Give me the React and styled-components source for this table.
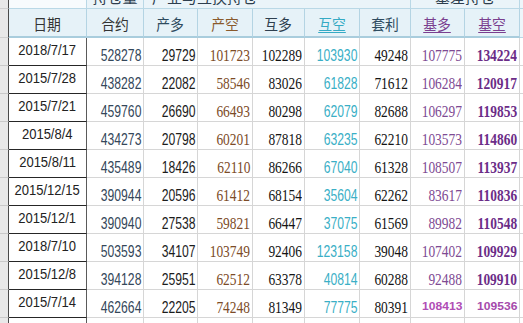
import React from "react";
import styled, { createGlobalStyle, css } from "styled-components";

const Global = createGlobalStyle`
  html, body { margin: 0; padding: 0; background: #fff; overflow: hidden; }
  #root { width: 523px; height: 323px; overflow: hidden; }
`;

const WIDTHS = [57, 54, 55, 52, 55, 51, 54, 55];

const Sheet = styled.div`
  display: grid;
  grid-template-columns: 9px 78px ${WIDTHS.map((w) => w + "px").join(" ")} 1fr;
  grid-template-rows: 9px 29px repeat(11, 28px);
  width: 523px;
  height: 323px;
  overflow: hidden;
  background: #fff;
  font-family: "Liberation Sans", "Noto Sans CJK SC", sans-serif;
`;

const Strip = styled.div`
  background: #e8e8e8;
  border-right: 1px solid #4a4a4a;
  border-bottom: 1px solid ${(p) => (p.$head ? "#d0d0d0" : "#c9c9c9")};
`;

const GroupCell = styled.div`
  grid-column: ${(p) => p.$span};
  background: ${(p) => (p.$blank ? "#f7fbfd" : "#eaf4f9")};
  border-right: 1px solid #b9d8e6;
  border-bottom: 1px solid #b9d8e6;
  display: flex;
  justify-content: ${(p) => (p.$left ? "flex-start" : "center")};
  align-items: flex-end;
  overflow: hidden;
  padding: 0 0 4px ${(p) => (p.$left ? "8px" : "0")};
  box-sizing: border-box;
  font-family: "Noto Sans CJK SC", sans-serif;
  font-size: 15px;
  line-height: 15px;
  color: #2d3e4e;
  white-space: nowrap;
`;

const HeadCell = styled.div`
  background: #e6f2f8;
  border-right: 1px solid #b4d4e3;
  border-bottom: 2px solid #a9cddd;
  display: flex;
  align-items: center;
  justify-content: center;
  box-sizing: border-box;
  padding-top: 1px;
  font-family: "Noto Sans CJK SC", sans-serif;
  font-size: 15px;
  color: ${(p) => p.$color};
  white-space: nowrap;
`;

const HeadText = styled.span`
  display: inline-block;
  transform: scaleX(0.92);
  ${(p) =>
    p.$underline &&
    css`
      text-decoration: underline;
      text-underline-offset: 2px;
      text-decoration-thickness: 1px;
    `}
`;

const DateCell = styled.div`
  border-right: 1px solid #5a5a5a;
  border-bottom: 1px solid #262626;
  display: flex;
  justify-content: center;
  align-items: flex-start;
  box-sizing: border-box;
  padding-top: 5px;
  font-family: "Liberation Sans", sans-serif;
  font-size: 14px;
  line-height: 14px;
  color: #222;
  white-space: nowrap;
`;

const DateText = styled.span`
  display: inline-block;
  transform: scaleX(0.93);
`;

const NumCell = styled.div`
  border-right: 1px solid #d6d6d6;
  border-bottom: 1px solid #d6d6d6;
  display: flex;
  justify-content: flex-end;
  align-items: flex-end;
  box-sizing: border-box;
  padding: 0 2px ${(p) => (p.$special ? "5px" : "1px")} 0;
  overflow: visible;
  white-space: nowrap;
`;

const Num = styled.span`
  display: inline-block;
  transform-origin: right bottom;
  color: ${(p) => p.$color};
  ${(p) =>
    p.$special
      ? css`
          font-family: "Liberation Sans", sans-serif;
          font-weight: bold;
          font-size: 11.5px;
          line-height: 11.5px;
          transform: scaleX(1.05);
        `
      : p.$serif
      ? css`
          font-family: "Liberation Serif", serif;
          font-weight: ${p.$bold ? "bold" : "normal"};
          font-size: 16px;
          line-height: 16px;
          transform: scaleX(0.84);
        `
      : css`
          font-family: "Liberation Sans", sans-serif;
          font-size: 16px;
          line-height: 16px;
          transform: scaleX(0.76);
        `}
`;

const Filler = styled.div`
  border-bottom: 1px solid ${(p) => (p.$head ? "#b9d8e6" : "#d6d6d6")};
  background: ${(p) => (p.$head ? "#eef6fa" : "#fff")};
`;

const COLS = [
  { name: "合约", color: "#34475a", head: "#333", serif: false },
  { name: "产多", color: "#1c1c1c", head: "#2e4b5f", serif: false },
  { name: "产空", color: "#7c4b27", head: "#8a5a2c", serif: true },
  { name: "互多", color: "#141414", head: "#2e3f4f", serif: true },
  { name: "互空", color: "#3aafc6", head: "#35aac4", serif: false, ul: true },
  { name: "套利", color: "#141414", head: "#2e4b5f", serif: true },
  { name: "基多", color: "#7e4a93", head: "#7a3f8f", serif: true, ul: true },
  { name: "基空", color: "#6b2c87", head: "#7a3f8f", serif: true, bold: true, ul: true },
];

const ROWS = [
  ["2018/7/17", 528278, 29729, 101723, 102289, 103930, 49248, 107775, 134224],
  ["2015/7/28", 438282, 22082, 58546, 83026, 61828, 71612, 106284, 120917],
  ["2015/7/21", 459760, 26690, 66493, 80298, 62079, 82688, 106297, 119853],
  ["2015/8/4", 434273, 20798, 60201, 87818, 63235, 62210, 103573, 114860],
  ["2015/8/11", 435489, 18426, 62110, 86266, 67040, 61328, 108507, 113937],
  ["2015/12/15", 390944, 20596, 61412, 68154, 35604, 62262, 83617, 110836],
  ["2015/12/1", 390940, 27538, 59821, 66447, 37075, 61569, 89982, 110548],
  ["2018/7/10", 503593, 34107, 103749, 92406, 123158, 39048, 107402, 109929],
  ["2015/12/8", 394128, 25951, 62512, 63378, 40814, 60288, 92488, 109910],
  ["2015/7/14", 462664, 22205, 74248, 81349, 77775, 80391, 108413, 109536],
];

export default function App() {
  return (
    <>
      <Global />
      <Sheet>
        <Strip $head />
        <GroupCell $span="2 / 3" $blank />
        <GroupCell $span="3 / 4">持仓量</GroupCell>
        <GroupCell $span="4 / 9" $left>
          产业与互换持仓
        </GroupCell>
        <GroupCell $span="9 / 11">基差持仓</GroupCell>
        <Filler $head />

        <Strip $head />
        <HeadCell $color="#333">
          <HeadText>日期</HeadText>
        </HeadCell>
        {COLS.map((c) => (
          <HeadCell key={c.name} $color={c.head}>
            <HeadText $underline={c.ul}>{c.name}</HeadText>
          </HeadCell>
        ))}
        <Filler $head />

        {ROWS.map((row, ri) => (
          <React.Fragment key={row[0]}>
            <Strip />
            <DateCell>
              <DateText>{row[0]}</DateText>
            </DateCell>
            {COLS.map((c, ci) => {
              const special = ri === 9 && ci >= 6;
              return (
                <NumCell key={c.name} $special={special}>
                  <Num
                    $color={special ? (ci === 6 ? "#b04db5" : "#a54aab") : c.color}
                    $serif={c.serif}
                    $bold={c.bold}
                    $special={special}
                  >
                    {row[ci + 1]}
                  </Num>
                </NumCell>
              );
            })}
            <Filler />
          </React.Fragment>
        ))}

        <Strip />
        <DateCell />
        {COLS.map((c) => (
          <NumCell key={c.name} />
        ))}
        <Filler />
      </Sheet>
    </>
  );
}
